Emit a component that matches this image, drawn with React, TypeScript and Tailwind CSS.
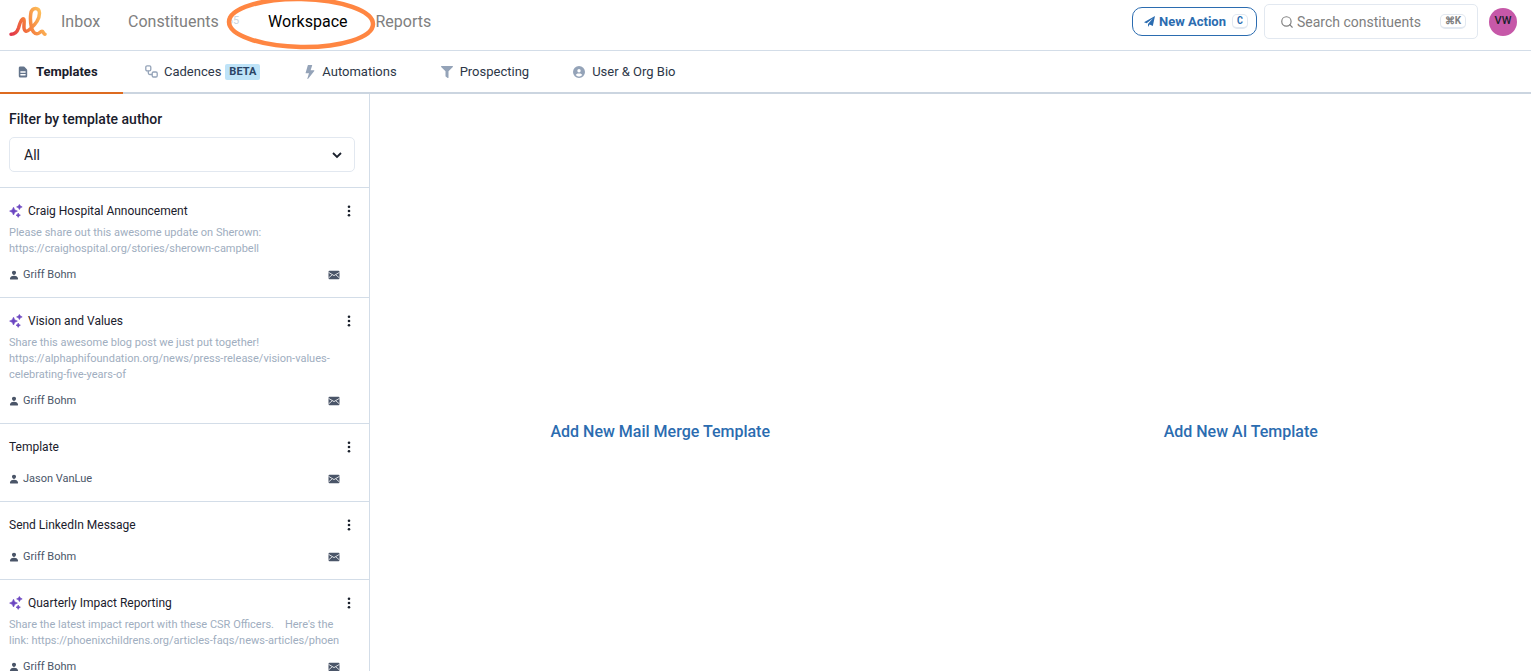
import { HiDocumentText } from "react-icons/hi";
import { BsLightningFill } from "react-icons/bs";
import { FaFilter } from "react-icons/fa";
import { FaCircleUser } from "react-icons/fa6";
import { IoPerson } from "react-icons/io5";
import { FiSearch } from "react-icons/fi";

type Template = {
  title: string;
  author: string;
  description?: string;
  ai?: boolean;
};

const templates: Template[] = [
  {
    title: "Craig Hospital Announcement",
    author: "Griff Bohm",
    ai: true,
    description:
      "Please share out this awesome update on Sherown:\nhttps://craighospital.org/stories/sherown-campbell",
  },
  {
    title: "Vision and Values",
    author: "Griff Bohm",
    ai: true,
    description:
      "Share this awesome blog post we just put together!\nhttps://alphaphifoundation.org/news/press-release/vision-values-\ncelebrating-five-years-of",
  },
  { title: "Template", author: "Jason VanLue" },
  { title: "Send LinkedIn Message", author: "Griff Bohm" },
  {
    title: "Quarterly Impact Reporting",
    author: "Griff Bohm",
    ai: true,
    description:
      "Share the latest impact report with these CSR Officers.    Here's the\nlink: https://phoenixchildrens.org/articles-faqs/news-articles/phoen",
  },
];

function Logo() {
  return (
    <svg width="38" height="32" viewBox="0 0 38 32" fill="none" aria-label="Home">
      <defs>
        <linearGradient id="logo-fill" x1="1" y1="30" x2="36" y2="14" gradientUnits="userSpaceOnUse">
          <stop offset="0" stopColor="#e0304a" />
          <stop offset="0.5" stopColor="#f47a3c" />
          <stop offset="1" stopColor="#fdbf5a" />
        </linearGradient>
      </defs>
      <path
        d="M2 28.300C6.500 28.300 8.200 26 9.500 22C10.800 17.500 12.300 12.800 14 12.800C16 12.800 14.800 18 15 21.500C15.200 25.500 17.500 26.200 20.500 23.500C26 19 30.500 12.500 30.500 7C30.500 0.800 22.800 0.800 21.800 7.500C20.800 14.500 22 27.800 28 27.800C30.500 27.800 31 25.300 33 25.300C34.600 25.300 34.300 28 36 28.300"
        stroke="url(#logo-fill)"
        strokeWidth="3.5"
        strokeLinecap="round"
        strokeLinejoin="round"
      />
    </svg>
  );
}

function CadenceIcon() {
  return (
    <svg width="13" height="13" viewBox="0 0 13 13" fill="none" stroke="#94a3b8" strokeWidth="1.3">
      <rect x="0.8" y="0.8" width="5" height="5" rx="1.300" />
      <rect x="7.2" y="7" width="5" height="5" rx="1.300" />
      <path d="M3.300 5.800V8a1.500 1.500 0 0 0 1.500 1.500h2.400" />
    </svg>
  );
}

function SparkleIcon() {
  return (
    <svg width="14" height="14" viewBox="0 0 14 14" fill="#6b46c1" stroke="#6b46c1" strokeWidth="0.6" strokeLinejoin="round">
      <path d="M4.500 3.200L5.800 5.900L8.400 7.100L5.800 8.300L4.500 11L3.200 8.300L0.600 7.100L3.200 5.900Z" />
      <path d="M10.400 0.400L11.300 2L13.200 2.900L11.300 3.800L10.400 5.600L9.500 3.800L7.600 2.900L9.500 2Z" />
      <path d="M9.200 9L9.900 10.500L11.400 11.200L9.900 11.900L9.200 13.400L8.500 11.900L7 11.200L8.500 10.500Z" />
    </svg>
  );
}

function MailIcon() {
  return (
    <svg width="12" height="10" viewBox="0 0 12 10" fill="none" aria-label="Email">
      <rect x="0.500" y="0.800" width="11" height="8.400" rx="1" fill="#4a5568" />
      <path d="M0.500 2.300L6 5.600L11.500 2.300M0.500 8L4.200 4.800M11.500 8L7.800 4.800" stroke="#fff" strokeWidth="0.8" />
    </svg>
  );
}

function KebabIcon() {
  return (
    <svg width="12" height="14" viewBox="0 0 12 14" fill="#1a202c">
      <circle cx="6" cy="2.700" r="1.300" />
      <circle cx="6" cy="7" r="1.300" />
      <circle cx="6" cy="11.300" r="1.300" />
    </svg>
  );
}

function TemplateCard({ template }: { template: Template }) {
  return (
    <li className="flex flex-col border-t border-[#d3dde8] pt-[13px] pr-[14px] pb-[14px] pl-[9px]">
      <div className="flex items-center justify-between">
        <h3 className="flex items-center gap-[5px] text-xs leading-5 text-[#1a202c]">
          {template.ai && <SparkleIcon />}
          {template.title}
        </h3>
        <button type="button" aria-label="Template options">
          <KebabIcon />
        </button>
      </div>
      <p className="mt-1 whitespace-pre text-[11px] leading-4 text-[#a0aec0]">{template.description}</p>
      <div className="mt-[10px] flex items-center justify-between pr-[15px]">
        <span className="flex items-center gap-1 text-[11px] leading-4 text-[#4a5568]">
          <IoPerson className="size-[10px]" />
          {template.author}
        </span>
        <MailIcon />
      </div>
    </li>
  );
}

export default function App() {
  return (
    <div className="flex h-screen flex-col overflow-hidden bg-white font-[Roboto,sans-serif] text-[#1a202c]">
      <header className="flex h-[51px] shrink-0 items-start justify-between border-b border-[#d3dde8] pr-[14px] pl-[9px]">
        <div className="flex h-[43px] items-center">
          <a href="#">
            <Logo />
          </a>
          <nav className="ml-[14px] flex items-center text-base text-[#808080]">
            <a href="#">Inbox</a>
            <a href="#" className="ml-7">
              Constituents
            </a>
            <span className="ml-2 text-[11px] text-[#cbd5e0]">55</span>
            <a href="#" className="relative ml-[29px] text-black">
              Workspace
              {/* highlight ring around the active section */}
              <svg className="pointer-events-none absolute -top-[14px] -left-[42px] max-w-none" width="150" height="54" fill="none">
                <ellipse cx="75" cy="27" rx="72" ry="24" stroke="#ff8642" strokeWidth="4.500" transform="rotate(1 75 27)" />
              </svg>
            </a>
            <a href="#" className="ml-7">
              Reports
            </a>
          </nav>
        </div>
        <div className="flex h-[43px] items-center">
          <button
            type="button"
            className="flex h-[29px] items-center rounded-[10px] border border-[#2b6cb0] pr-2 pl-[11px] text-[13px] font-bold text-[#2b6cb0]">
            <svg width="11" height="11" viewBox="0 0 11 11" className="mr-1" fill="#2b6cb0">
              <path d="M11 0L0 6.200L2.600 7.300L9 2.200L4 7.900V11L5.600 8.600L8.800 9.900Z" />
            </svg>
            New Action
            <kbd className="ml-[6px] rounded-[5px] border border-b-2 border-[#e2e8f0] px-1 font-[Roboto_Mono,Liberation_Mono,monospace] text-[10px] leading-3">
              C
            </kbd>
          </button>
          <label className="ml-[7px] flex h-[35px] w-[214px] items-center rounded-[5px] border border-[#e2e8f0] pr-[11px] pl-[15px]">
            <FiSearch className="size-[14px] shrink-0 text-[#808080]" />
            <input
              type="search"
              aria-label="Search constituents"
              placeholder="Search constituents"
              className="ml-[3px] min-w-0 flex-1 text-sm outline-none placeholder:text-[#808080]"
            />
            <kbd className="rounded-[5px] border border-b-2 border-[#e2e8f0] px-1 font-[Roboto,sans-serif] text-[10px] leading-3 font-bold text-[#808080]">
              ⌘K
            </kbd>
          </label>
          <button
            type="button"
            className="ml-[11px] size-7 rounded-full bg-[#c658a8] text-[11px] font-medium text-[#1a202c]">
            VW
          </button>
        </div>
      </header>

      <nav className="flex h-[43px] shrink-0 border-b-2 border-[#cbd5e0] text-[13px] text-[#2d3748]">
        <a href="#" className="-mb-[2px] flex w-[123px] items-center gap-[6px] border-b-2 border-[#dd6b20] pl-4 font-bold text-[#1a202c]">
          <HiDocumentText className="size-[14px] text-[#64748b]" />
          Templates
        </a>
        <a href="#" className="ml-[22px] flex items-center gap-[6px]">
          <CadenceIcon />
          <span className="flex items-center gap-1">
            Cadences
            <span className="rounded-xs bg-[#bee3f8] px-1 text-[11px] leading-4 font-bold text-[#2a4365]">BETA</span>
          </span>
        </a>
        <a href="#" className="ml-[43px] flex items-center gap-[5px]">
          <BsLightningFill className="size-[14px] text-[#94a3b8]" />
          Automations
        </a>
        <a href="#" className="ml-11 flex items-center gap-[7px]">
          <FaFilter className="size-3 text-[#94a3b8]" />
          Prospecting
        </a>
        <a href="#" className="ml-11 flex items-center gap-[7px]">
          <FaCircleUser className="size-3 text-[#94a3b8]" />
          User &amp; Org Bio
        </a>
      </nav>

      <div className="flex min-h-0 flex-1">
        <aside className="w-[370px] shrink-0 overflow-y-auto border-r border-[#d3dde8] [scrollbar-width:none]">
          <div className="pt-[15px] pr-[14px] pb-[15px] pl-[9px]">
            <label htmlFor="author" className="block text-sm leading-5 font-medium">
              Filter by template author
            </label>
            <div className="relative mt-2">
              <select
                id="author"
                className="h-[35px] w-full appearance-none rounded-[5px] border border-[#e2e8f0] bg-white px-[14px] text-sm">
                <option>All</option>
              </select>
              <svg className="pointer-events-none absolute top-3 right-3" width="12" height="12" fill="none" stroke="#1a202c" strokeWidth="1.8">
                <path d="M2 4L6 8L10 4" />
              </svg>
            </div>
          </div>
          <ul>
            {templates.map((template) => (
              <TemplateCard key={template.title} template={template} />
            ))}
          </ul>
        </aside>
        <main className="grid flex-1 grid-cols-2 pt-[98px] text-base font-medium text-[#2b6cb0]">
          <button type="button">Add New Mail Merge Template</button>
          <button type="button">Add New AI Template</button>
        </main>
      </div>
    </div>
  );
}
